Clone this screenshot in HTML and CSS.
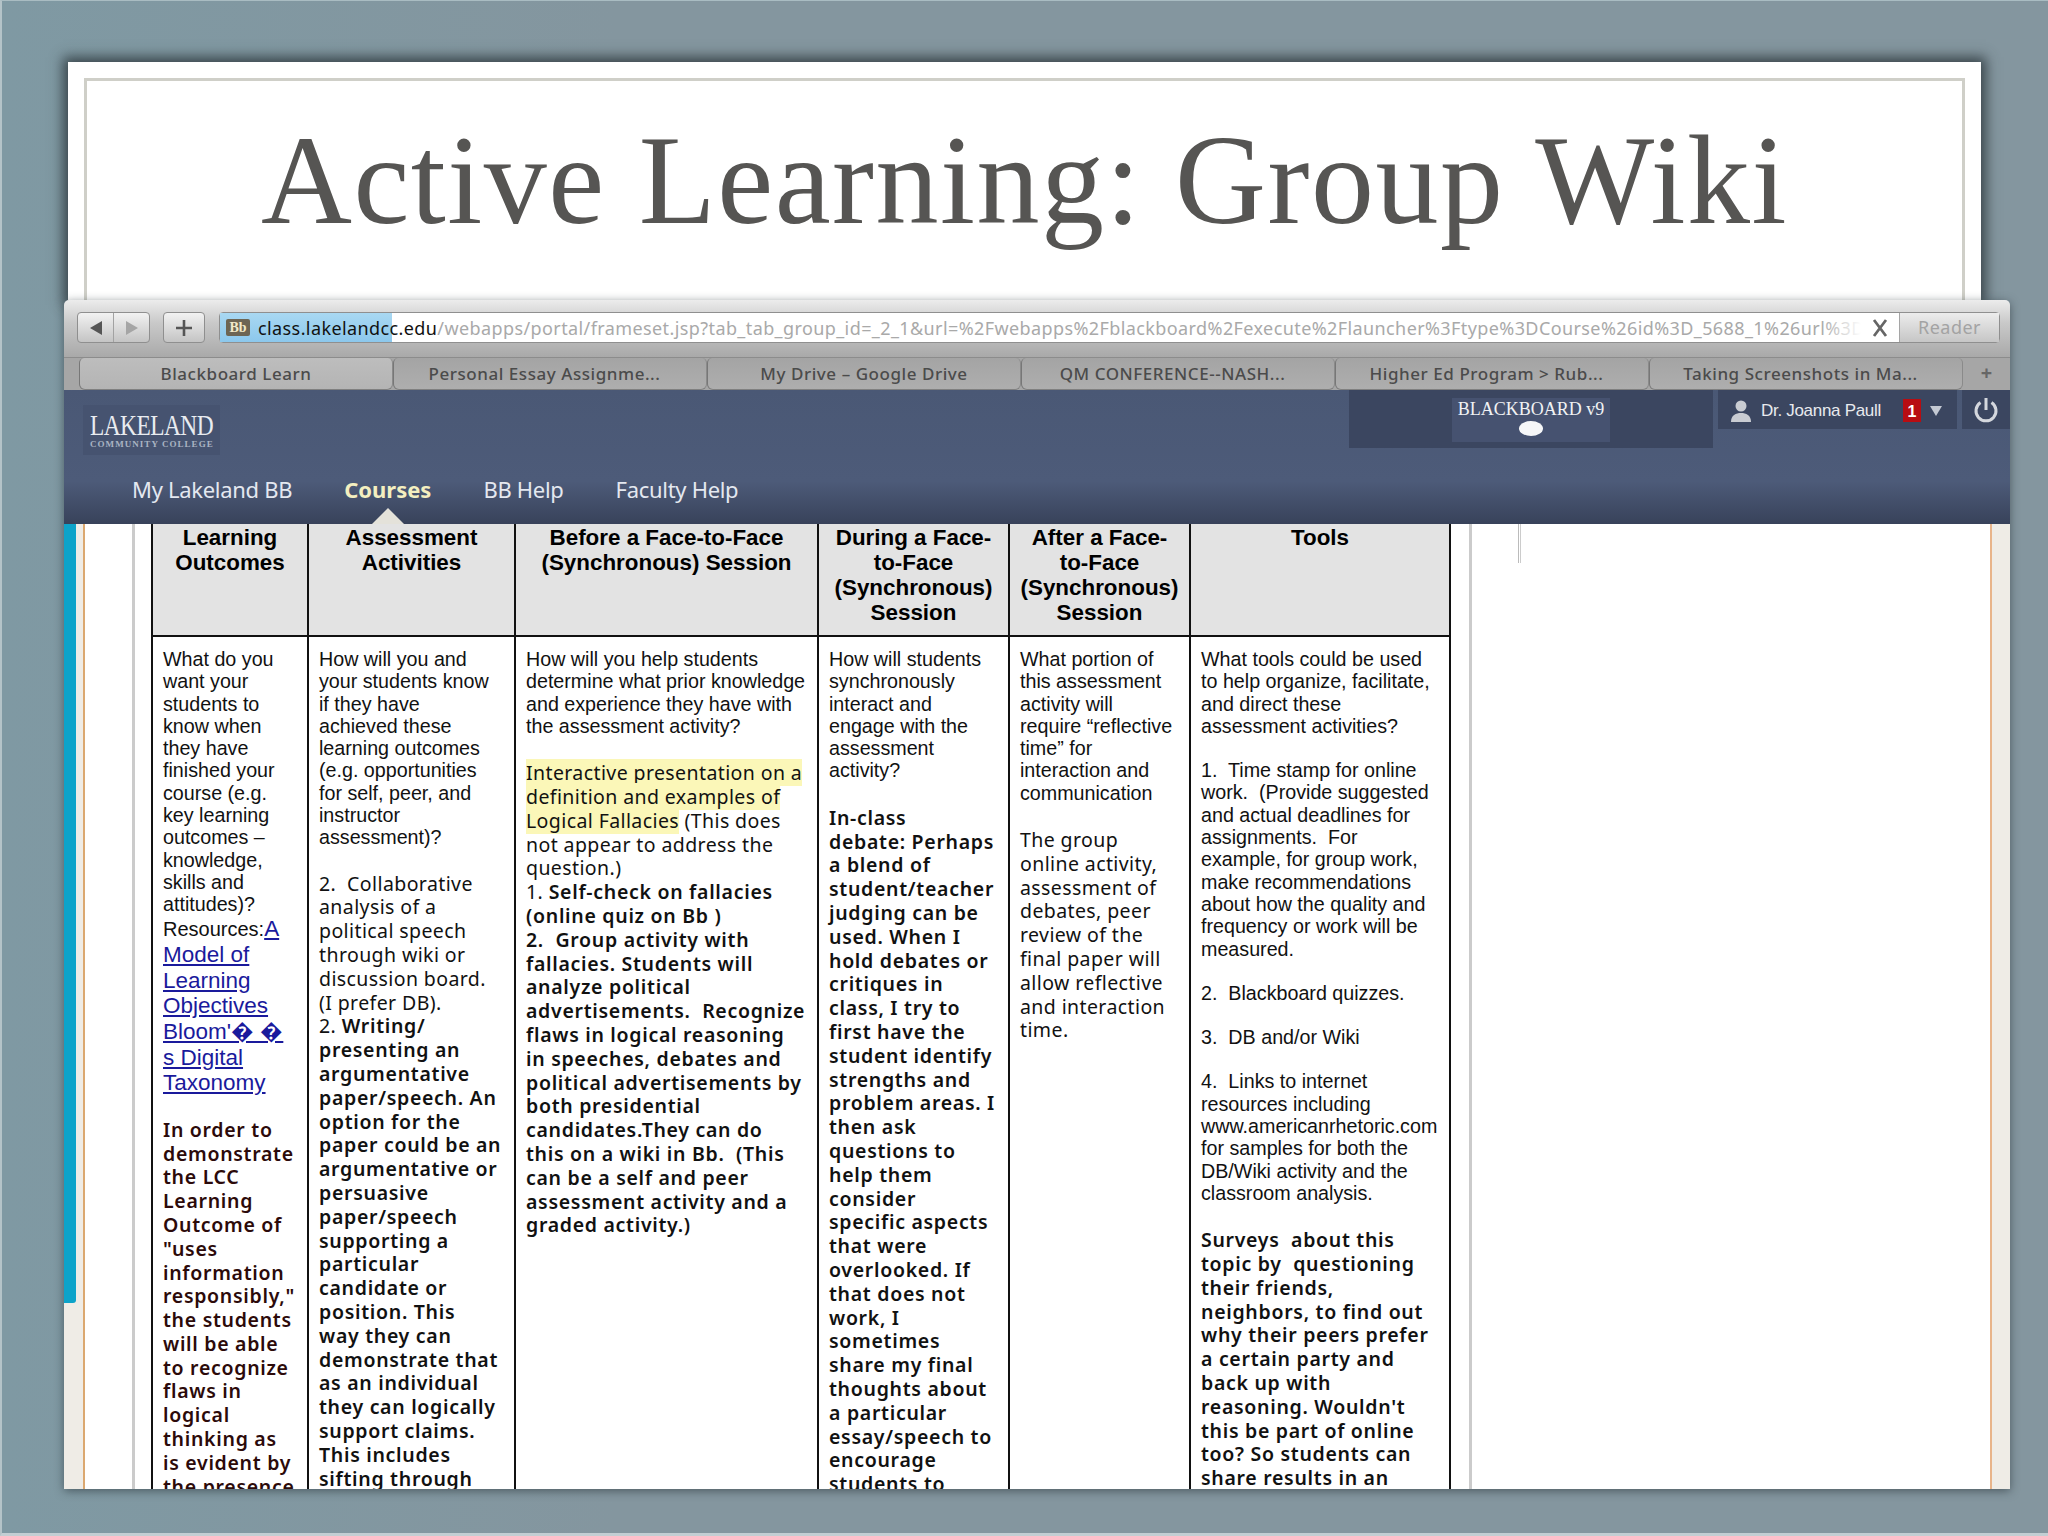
FILE: index.html
```html
<!DOCTYPE html>
<html lang="en">
<head>
    <meta charset="UTF-8">
    <title>Active Learning: Group Wiki</title>
    <link rel="stylesheet" href="styles.css">
</head>
<body>

<div class="stage">
    <div class="slide">
        <div class="slide-frame">
            <h1>Active Learning: Group Wiki</h1>
        </div>
    </div>

    <div class="window">
        <!-- Safari toolbar -->
        <div class="toolbar">
            <div class="nav-btns">
                <span class="nav-btn"><svg width="14" height="16" viewBox="0 0 14 16"><path d="M13 1 L1 8 L13 15 Z" fill="#555"/></svg></span>
                <span class="nav-btn"><svg width="14" height="16" viewBox="0 0 14 16"><path d="M1 1 L13 8 L1 15 Z" fill="#a5a5a5"/></svg></span>
            </div>
            <span class="plus-btn"><svg width="20" height="20" viewBox="0 0 20 20"><path d="M10 2 V18 M2 10 H18" stroke="#555" stroke-width="2.6"/></svg></span>
            <div class="url-bar">
                <div class="url-text-box">
                    <span class="url-select"></span>
                    <span class="favicon">Bb</span>
                    <span class="url-text"><span class="url-host">class.lakelandcc.edu</span>/webapps/portal/frameset.jsp?tab_tab_group_id=_2_1&amp;url=%2Fwebapps%2Fblackboard%2Fexecute%2Flauncher%3Ftype%3DCourse%26id%3D_5688_1%26url%3D</span>
                </div>
                <svg class="url-close" width="18" height="18" viewBox="0 0 18 18"><path d="M3 1 L15 17 M15 1 L3 17" stroke="#666" stroke-width="2.8"/></svg>
                <span class="reader-btn">Reader</span>
            </div>
        </div>

        <!-- Tabs -->
        <div class="tabs">
            <span class="tab-start"></span>
            <div class="tab tab-current">Blackboard Learn</div>
            <div class="tab tab-long">Personal Essay Assignme...</div>
            <div class="tab">My Drive – Google Drive</div>
            <div class="tab tab-long">QM CONFERENCE--NASH...</div>
            <div class="tab tab-long">Higher Ed Program &gt; Rub...</div>
            <div class="tab tab-long">Taking Screenshots in Ma...</div>
            <div class="tab-add">+</div>
        </div>

        <!-- Blackboard header -->
        <div class="bb-header">
            <div class="bb-top">
                <div class="logo">
                    <div class="logo-main">LAKELAND</div>
                    <div class="logo-sub">COMMUNITY COLLEGE</div>
                </div>
                <div class="bb-panel">
                    <div class="bb-panel-inner">
                        <div>BLACKBOARD v9</div>
                        <span class="bb-dot"></span>
                    </div>
                </div>
                <div class="user-panel">
                    <svg width="22" height="24" viewBox="0 0 22 24"><circle cx="11" cy="7" r="5.5" fill="#c9ccd2"/><path d="M1 23 C1 16 6 14 11 14 C16 14 21 16 21 23 Z" fill="#c9ccd2"/></svg>
                    <span class="user-name">Dr. Joanna Paull</span>
                    <span class="badge">1</span>
                    <svg width="12" height="10" viewBox="0 0 12 10"><path d="M0 0 H12 L6 10 Z" fill="#c4c9d3"/></svg>
                </div>
                <div class="power-panel">
                    <svg width="26" height="28" viewBox="0 0 26 28"><path d="M7.5 6.5 A10 10 0 1 0 18.5 6.5" fill="none" stroke="#d4d7dd" stroke-width="3"/><path d="M13 2 V14" stroke="#d4d7dd" stroke-width="3"/></svg>
                </div>
            </div>
            <div class="bb-nav">
                <a>My Lakeland BB</a>
                <a class="active">Courses</a>
                <a>BB Help</a>
                <a>Faculty Help</a>
            </div>
        </div>

        <!-- Page content -->
        <div class="content">
            <div class="scroll-stripe"></div>
            <div class="page">
                <div class="table-wrap">
                    <table class="rubric">
                        <colgroup>
                            <col class="c1"><col class="c2"><col class="c3"><col class="c4"><col class="c5"><col class="c6">
                        </colgroup>
                        <tr>
                            <th>Learning<br>Outcomes</th>
                            <th>Assessment<br>Activities</th>
                            <th>Before a Face-to-Face<br>(Synchronous) Session</th>
                            <th>During a Face-<br>to-Face<br>(Synchronous)<br>Session</th>
                            <th>After a Face-<br>to-Face<br>(Synchronous)<br>Session</th>
                            <th>Tools</th>
                        </tr>
                        <tr>
                            <td>
                                <p class="plain">What do you<br>want your<br>students to<br>know when<br>they have<br>finished your<br>course (e.g.<br>key learning<br>outcomes –<br>knowledge,<br>skills and<br>attitudes)?</p>
                                <p class="res"><span class="res-label">Resources:</span><a>A<br>Model of<br>Learning<br>Objectives<br>Bloom'� �<br>s Digital<br>Taxonomy</a></p>
                                <p class="strong dark gap-22">In order to<br>demonstrate<br>the LCC<br>Learning<br>Outcome of<br>"uses<br>information<br>responsibly,"<br>the students<br>will be able<br>to recognize<br>flaws in<br>logical<br>thinking as<br>is evident by<br>the presence</p>
                            </td>
                            <td>
                                <p class="plain">How will you and<br>your students know<br>if they have<br>achieved these<br>learning outcomes<br>(e.g. opportunities<br>for self, peer, and<br>instructor<br>assessment)?</p>
                                <p class="soft gap-23">2.&nbsp; Collaborative<br>analysis of a<br>political speech<br>through wiki or<br>discussion board.<br>(I prefer DB).<br>2. <b>Writing/</b></p>
                                <p class="strong">presenting an<br>argumentative<br>paper/speech. An<br>option for the<br>paper could be an<br>argumentative or<br>persuasive<br>paper/speech<br>supporting a<br>particular<br>candidate or<br>position. This<br>way they can<br>demonstrate that<br>as an individual<br>they can logically<br>support claims.<br>This includes<br>sifting through</p>
                            </td>
                            <td>
                                <p class="plain">How will you help students<br>determine what prior knowledge<br>and experience they have with<br>the assessment activity?</p>
                                <p class="soft gap-24"><mark>Interactive presentation on a</mark><br><mark>definition and examples of</mark><br><mark>Logical Fallacies</mark> (This does<br>not appear to address the<br>question.)<br>1. <b>Self-check on fallacies</b></p>
                                <p class="strong">(online quiz on Bb )<br>2.&nbsp; Group activity with<br>fallacies. Students will<br>analyze political<br>advertisements.&nbsp; Recognize<br>flaws in logical reasoning<br>in speeches, debates and<br>political advertisements by<br>both presidential<br>candidates.They can do<br>this on a wiki in Bb.&nbsp; (This<br>can be a self and peer<br>assessment activity and a<br>graded activity.)</p>
                            </td>
                            <td>
                                <p class="plain">How will students<br>synchronously<br>interact and<br>engage with the<br>assessment<br>activity?</p>
                                <p class="strong gap-24">In-class<br>debate: Perhaps<br>a blend of<br>student/teacher<br>judging can be<br>used. When I<br>hold debates or<br>critiques in<br>class, I try to<br>first have the<br>student identify<br>strengths and<br>problem areas. I<br>then ask<br>questions to<br>help them<br>consider<br>specific aspects<br>that were<br>overlooked. If<br>that does not<br>work, I<br>sometimes<br>share my final<br>thoughts about<br>a particular<br>essay/speech to<br>encourage<br>students to</p>
                            </td>
                            <td>
                                <p class="plain">What portion of<br>this assessment<br>activity will<br>require “reflective<br>time” for<br>interaction and<br>communication</p>
                                <p class="soft gap-24">The group<br>online activity,<br>assessment of<br>debates, peer<br>review of the<br>final paper will<br>allow reflective<br>and interaction<br>time.</p>
                            </td>
                            <td>
                                <p class="plain">What tools could be used<br>to help organize, facilitate,<br>and direct these<br>assessment activities?</p>
                                <p class="plain gap-22">1.&nbsp; Time stamp for online<br>work.&nbsp; (Provide suggested<br>and actual deadlines for<br>assignments.&nbsp; For<br>example, for group work,<br>make recommendations<br>about how the quality and<br>frequency or work will be<br>measured.</p>
                                <p class="plain gap-22">2.&nbsp; Blackboard quizzes.</p>
                                <p class="plain gap-22">3.&nbsp; DB and/or Wiki</p>
                                <p class="plain gap-22">4.&nbsp; Links to internet<br>resources including<br>www.americanrhetoric.com<br>for samples for both the<br>DB/Wiki activity and the<br>classroom analysis.</p>
                                <p class="strong gap-24">Surveys&nbsp; about this<br>topic by&nbsp; questioning<br>their friends,<br>neighbors, to find out<br>why their peers prefer<br>a certain party and<br>back up with<br>reasoning. Wouldn't<br>this be part of online<br>too? So students can<br>share results in an</p>
                            </td>
                        </tr>
                    </table>
                </div>
                <div class="page-rest">
                    <span class="rest-line"></span>
                </div>
            </div>
        </div>
    </div>
</div>

</body>
</html>
```

FILE: styles.css
```css
* {
    box-sizing: border-box;
}

body {
    margin: 0;
    background-color: #84969f;
    font-family: 'Liberation Sans', Arial, sans-serif;
}

.stage {
    width: 2048px;
    height: 1536px;
    padding: 61px 0 0 62px;
    overflow: hidden;
    background: linear-gradient(90deg, #7f99a3 0, #84969f 30%, #84969f 100%);
    border-top: 1px solid #a9bcc2;
    border-left: 2px solid #b4c3c8;
    border-bottom: 3px solid #c3ced3;
}

/* Slide card behind the browser window */
.slide {
    width: 1913px;
    height: 238px;
    margin-left: 4px;
    padding: 16px 16px 0;
    background-color: #fff;
    box-shadow: 0 0 12px 5px rgba(45, 55, 60, 0.85);
}

.slide-frame {
    height: 100%;
    border: 3px solid #cfcfc8;
    border-bottom: none;
    text-align: center;
}

h1 {
    margin: 0;
    padding-top: 30px;
    font-family: 'Liberation Serif', 'Times New Roman', serif;
    font-size: 126px;
    font-weight: normal;
    line-height: 140px;
    letter-spacing: 1.5px;
    color: #565553;
    white-space: nowrap;
}

.window {
    position: relative;
    width: 1946px;
    height: 1189px;
    overflow: hidden;
    border-radius: 5px 5px 0 0;
    box-shadow: 0 2px 10px rgba(30, 40, 46, 0.55);
}

/* Toolbar */
.toolbar {
    display: flex;
    align-items: center;
    height: 58px;
    padding: 0 10px 2px 13px;
    background: linear-gradient(#ececec, #c9c9c9 40%, #a9a9a9);
    border-bottom: 1px solid #8c8c8c;
}

.nav-btns {
    display: flex;
    flex: none;
    width: 73px;
    height: 31px;
    border: 1px solid #8f8f8f;
    border-radius: 4px;
    background: linear-gradient(#f2f2f2, #c4c4c4);
}

.nav-btn {
    display: flex;
    flex: 1;
    align-items: center;
    justify-content: center;
}

.nav-btn:first-child {
    border-right: 1px solid #a2a2a2;
}

.plus-btn {
    display: flex;
    flex: none;
    align-items: center;
    justify-content: center;
    width: 42px;
    height: 31px;
    margin-left: 13px;
    border: 1px solid #8f8f8f;
    border-radius: 4px;
    background: linear-gradient(#f2f2f2, #c4c4c4);
}

.url-bar {
    display: flex;
    flex: 1;
    align-items: center;
    min-width: 0;
    height: 31px;
    margin-left: 14px;
    background-color: #fff;
    border: 1px solid #8f8f8f;
    border-radius: 4px;
}

.url-text-box {
    position: relative;
    display: flex;
    flex: 1;
    align-items: center;
    min-width: 0;
    height: 100%;
    overflow: hidden;
}

.url-text-box::after {
    content: "";
    position: absolute;
    right: 0;
    top: 0;
    bottom: 0;
    width: 40px;
    background: linear-gradient(90deg, rgba(255, 255, 255, 0), #fff);
}

.url-select {
    position: absolute;
    left: 0;
    top: 0;
    bottom: 0;
    width: 172px;
    background: linear-gradient(#a9d8f2, #8cc8ec);
}

.favicon {
    position: relative;
    flex: none;
    width: 24px;
    height: 17px;
    margin-left: 6px;
    border-radius: 2px;
    background-color: #6d6553;
    color: #f1e9c8;
    font-family: 'Liberation Serif', serif;
    font-size: 14px;
    font-weight: bold;
    line-height: 17px;
    text-align: center;
}

.url-text {
    position: relative;
    margin-left: 8px;
    font-family: 'Noto Sans', sans-serif;
    font-size: 18px;
    letter-spacing: 0.4px;
    color: #a9a9a9;
    white-space: nowrap;
}

.url-host {
    color: #111;
}

.url-close {
    flex: none;
    margin: 0 10px;
}

.reader-btn {
    flex: none;
    width: 100px;
    height: 100%;
    border-left: 1px solid #a5a5a5;
    background: linear-gradient(#ececec, #c6c6c6);
    font-family: 'Noto Sans', sans-serif;
    font-size: 18px;
    line-height: 28px;
    letter-spacing: 0.5px;
    text-align: center;
    color: #a3a3a3;
}

/* Tabs */
.tabs {
    display: flex;
    height: 32px;
    background-color: #a6a6a6;
}

.tab-start {
    width: 15px;
    background-color: #a6a6a6;
}

.tab {
    width: 314px;
    border-left: 1px solid #777;
    border-right: 1px solid #8a8a8a;
    border-bottom: 1px solid #808080;
    border-radius: 5px 5px 6px 6px;
    background: linear-gradient(#a4a4a4, #aeaeae);
    font-family: 'Noto Sans', sans-serif;
    font-size: 17px;
    font-weight: 500;
    line-height: 32px;
    letter-spacing: 0.55px;
    text-align: center;
    color: #4b4b4b;
    white-space: nowrap;
}

.tab-long {
    padding-right: 11px;
}

.tab-current {
    background: linear-gradient(#bdbdbd, #b4b4b4);
}

.tab-add {
    flex: 1;
    font-family: 'Noto Sans', sans-serif;
    font-size: 20px;
    font-weight: bold;
    line-height: 30px;
    text-align: center;
    color: #666;
}

/* Blackboard header */
.bb-header {
    height: 134px;
    background: linear-gradient(#4a5875 0, #4d5b79 68%, #38425a 100%);
}

.bb-top {
    display: flex;
    align-items: flex-start;
    height: 58px;
}

.logo {
    width: 137px;
    height: 50px;
    margin: 15px 0 0 19px;
    padding: 9px 0 0 7px;
    background-color: #465370;
    color: #e9ecf0;
    font-family: 'Liberation Serif', serif;
}

.logo-main {
    font-size: 26px;
    line-height: 24px;
    letter-spacing: -0.6px;
    transform: scale(0.9, 1.12);
    transform-origin: left center;
}

.logo-sub {
    font-size: 9px;
    font-weight: bold;
    line-height: 12px;
    letter-spacing: 1.05px;
    color: #aab3c3;
    white-space: nowrap;
}

.bb-panel {
    display: flex;
    justify-content: center;
    width: 364px;
    height: 58px;
    margin-left: auto;
    padding-top: 8px;
    background-color: #3b4660;
}

.bb-panel-inner {
    display: flex;
    flex-direction: column;
    align-items: center;
    width: 158px;
    height: 44px;
    background-color: #465270;
    color: #f1f2f4;
    font-family: 'Liberation Serif', serif;
    font-size: 18px;
    line-height: 23px;
    white-space: nowrap;
}

.bb-dot {
    width: 24px;
    height: 15px;
    border-radius: 50%;
    background-color: #f6f7f8;
}

.user-panel {
    display: flex;
    align-items: center;
    width: 239px;
    height: 39px;
    margin-left: 5px;
    padding: 2px 0 0 12px;
    background-color: #3b4660;
}

.user-name {
    margin-left: 9px;
    font-size: 17px;
    letter-spacing: -0.3px;
    color: #e8eaee;
    white-space: nowrap;
}

.badge {
    width: 18px;
    height: 23px;
    margin: 0 9px 0 22px;
    background-color: #b80d12;
    color: #fff;
    font-size: 16px;
    font-weight: bold;
    line-height: 25px;
    text-align: center;
}

.power-panel {
    display: flex;
    align-items: center;
    justify-content: center;
    width: 48px;
    height: 39px;
    margin-left: 5px;
    background-color: #3b4660;
}

.bb-nav {
    display: flex;
    gap: 52px;
    padding: 25px 0 0 68px;
    font-family: 'Noto Sans', sans-serif;
    font-size: 22px;
    line-height: 32px;
    letter-spacing: -0.3px;
    color: #e4e8f0;
}

.bb-nav a {
    position: relative;
}

.bb-nav .active {
    font-weight: bold;
    letter-spacing: 0;
    color: #f4efc0;
}

/* Little arrow under the current menu item */
.bb-nav .active::after {
    content: "";
    position: absolute;
    left: 50%;
    bottom: -19px;
    margin-left: -16px;
    border-left: 16px solid transparent;
    border-right: 16px solid transparent;
    border-bottom: 16px solid #e4e2da;
}

/* Page content */
.content {
    display: flex;
    height: 965px;
    overflow: hidden;
    background-color: #efece6;
}

.scroll-stripe {
    flex: none;
    width: 12px;
    height: 779px;
    border-radius: 0 0 3px 0;
    background-color: #0da3c9;
}

.page {
    display: flex;
    flex: 1;
    margin: 0 18px 0 7px;
    padding-left: 47px;
    background-color: #fff;
    border-left: 2px solid #dba870;
    border-right: 2px solid #e8b48a;
}

.table-wrap {
    flex: none;
    width: 1340px;
    padding-left: 16px;
    border-left: 3px solid #cbcbcb;
    border-right: 3px solid #cbcbcb;
}

.page-rest {
    flex: 1;
    padding-left: 46px;
}

.rest-line {
    display: block;
    width: 3px;
    height: 39px;
    border-left: 1px solid #bbb;
    border-right: 1px solid #ccc;
}

.rubric {
    table-layout: fixed;
    width: 1298px;
    border-collapse: collapse;
    color: #111;
}

.c1 { width: 156px; }
.c2 { width: 207px; }
.c3 { width: 303px; }
.c4 { width: 191px; }
.c5 { width: 181px; }
.c6 { width: 260px; }

.rubric th, .rubric td {
    border: 2px solid #111;
    vertical-align: top;
}

.rubric tr:first-child th {
    border-top: none;
}

.rubric th {
    height: 112px;
    padding: 1px 2px 0;
    background-color: #e3e3e3;
    font-size: 22.4px;
    line-height: 25px;
    color: #000;
}

.rubric td {
    padding: 11px 8px 0 10px;
    white-space: nowrap;
}

.rubric p {
    margin: 0;
}

.plain {
    font-size: 19.7px;
    line-height: 22.3px;
}

.res {
    font-size: 22.5px;
    line-height: 25.6px;
}

.res-label {
    font-size: 20px;
}

.res a {
    color: #1a1a9c;
    text-decoration: underline;
}

.soft {
    font-family: 'Noto Sans', sans-serif;
    font-size: 19.5px;
    line-height: 23.8px;
    letter-spacing: 0.4px;
}

.soft b {
    font-weight: 600;
    letter-spacing: 0.7px;
}

.strong {
    font-family: 'Noto Sans', sans-serif;
    font-size: 19.5px;
    font-weight: 600;
    line-height: 23.8px;
    letter-spacing: 0.7px;
}

.dark {
    color: #2c0a0a;
}

mark {
    background-color: #fbf7b8;
    color: #111;
}

.gap-22 { margin-top: 22px !important; }
.gap-23 { margin-top: 23px !important; }
.gap-24 { margin-top: 24px !important; }
```
